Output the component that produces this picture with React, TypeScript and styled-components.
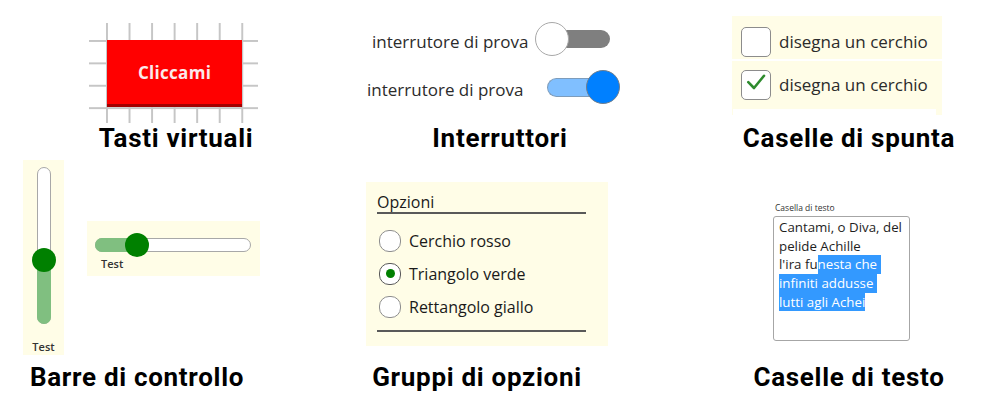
import React from "react";
import styled, { createGlobalStyle } from "styled-components";

const Global = createGlobalStyle`
  html, body { margin: 0; padding: 0; background: #ffffff; }
  body {
    width: 986px; height: 402px; overflow: hidden;
    font-family: "Open Sans", "Liberation Sans", sans-serif;
  }
`;

const PANEL = "#fffde7";

const Page = styled.div`
  width: 986px;
  height: 402px;
  display: flex;
  flex-direction: column;
`;

const Row = styled.div<{ $h: number; $pb: number }>`
  height: ${(p) => p.$h}px;
  box-sizing: border-box;
  padding-bottom: ${(p) => p.$pb}px;
  display: grid;
  grid-template-columns: 330px 360px 296px;
`;

const Cell = styled.div`
  display: flex;
  flex-direction: column;
  align-items: flex-start;
  min-width: 0;
`;

const Caption = styled.div<{ $cx: number }>`
  margin-top: auto;
  margin-left: ${(p) => p.$cx - 130}px;
  width: 260px;
  text-align: center;
  font-family: Roboto, "Liberation Sans", sans-serif;
  font-weight: 700;
  font-size: 26px;
  line-height: 30px;
  letter-spacing: 0.7px;
  color: #000;
  white-space: nowrap;
`;

/* ---------- Tasti virtuali ---------- */
const GridPad = styled.div`
  margin: 23px 0 0 89px;
  width: 169px;
  height: 100px;
  box-sizing: border-box;
  padding: 17px 0 0 18px;
  background-image: linear-gradient(to right, #c6c6c6 2px, transparent 2px),
    linear-gradient(to bottom, #c6c6c6 2px, transparent 2px);
  background-size: 22.55px 100%, 100% 22.4px;
  background-position: 17px 0, 0 17px;
`;

const VirtualButton = styled.button`
  width: 135px;
  height: 67px;
  margin: 0;
  padding: 0;
  border: none;
  border-bottom: 3px solid #a30000;
  box-sizing: border-box;
  background: #ff0000;
  color: #fbeaea;
  font-family: "Open Sans", sans-serif;
  font-weight: 700;
  font-size: 17px;
  letter-spacing: 0.3px;
  display: flex;
  align-items: center;
  justify-content: center;
`;

/* ---------- Interruttori ---------- */
const SwitchStack = styled.div`
  display: flex;
  flex-direction: column;
  gap: 14px;
  margin-top: 22px;
`;

const SwitchRow = styled.div<{ $x: number; $gap: number }>`
  display: flex;
  align-items: center;
  margin-left: ${(p) => p.$x}px;
  gap: ${(p) => p.$gap}px;
`;

const SwitchLabel = styled.span`
  font-size: 17px;
  line-height: 24px;
  padding-top: 5px;
  color: #2b2b2b;
  white-space: nowrap;
`;

const SwitchBody = styled.div<{ $w: number }>`
  position: relative;
  width: ${(p) => p.$w}px;
  height: 34px;
  flex: none;
`;

const SwitchTrack = styled.div<{ $on: boolean }>`
  position: absolute;
  top: 8px;
  box-sizing: border-box;
  ${(p) =>
    p.$on
      ? `left: 0; right: 17px; height: 19px; background: #80bfff; border: 1px solid #7d9cbb; border-right: none; border-radius: 10px 0 0 10px;`
      : `left: 8px; right: 0; height: 18px; background: #7f7f7f; border-radius: 0 9px 9px 0;`}
`;

const SwitchKnob = styled.div<{ $on: boolean }>`
  position: absolute;
  top: 0;
  ${(p) => (p.$on ? "right: 0;" : "left: 0;")}
  width: 34px;
  height: 34px;
  box-sizing: border-box;
  border-radius: 50%;
  background: ${(p) => (p.$on ? "#0080ff" : "#ffffff")};
  border: 1px solid ${(p) => (p.$on ? "#6f7f8f" : "#a8a8a8")};
`;

/* ---------- Caselle di spunta ---------- */
const CheckStack = styled.div`
  margin: 16px 0 0 42px;
  display: flex;
  flex-direction: column;
  gap: 2px;
`;

const CheckPanel = styled.div<{ $h: number; $pt: number }>`
  width: 210px;
  height: ${(p) => p.$h}px;
  box-sizing: border-box;
  padding-top: ${(p) => p.$pt}px;
  background: ${PANEL};
  display: flex;
  flex-direction: column;
`;

const CheckRow = styled.div`
  display: flex;
  align-items: center;
  gap: 8px;
  margin-left: 9px;
`;

const CheckBox = styled.div`
  width: 30px;
  height: 30px;
  box-sizing: border-box;
  border: 1.5px solid #8c8c8c;
  border-radius: 5px;
  background: #fff;
  display: flex;
  align-items: center;
  justify-content: center;
  flex: none;
`;

const CheckLabel = styled.span`
  font-size: 17px;
  line-height: 24px;
  color: #2b2b2b;
  white-space: nowrap;
`;

const WhiteStrip = styled.div`
  margin: auto 6px 0 1px;
  height: 6px;
  background: #ffffff;
`;

/* ---------- Barre di controllo ---------- */
const SliderArea = styled.div`
  display: flex;
  align-items: flex-start;
  gap: 23px;
  margin-left: 23px;
`;

const VPanel = styled.div`
  width: 41px;
  height: 195px;
  box-sizing: border-box;
  padding: 7px 0 1px;
  background: ${PANEL};
  display: flex;
  flex-direction: column;
  align-items: center;
`;

const HPanel = styled.div`
  margin-top: 61px;
  width: 173px;
  height: 55px;
  box-sizing: border-box;
  padding: 17px 0 0 8px;
  background: ${PANEL};
  display: flex;
  flex-direction: column;
  align-items: flex-start;
`;

const Track = styled.div<{ $w: number; $h: number }>`
  position: relative;
  width: ${(p) => p.$w}px;
  height: ${(p) => p.$h}px;
  box-sizing: border-box;
  border: 1px solid #a8a8a8;
  border-radius: 7px;
  background: #fff;
  flex: none;
`;

const Fill = styled.div<{ $vertical: boolean }>`
  position: absolute;
  background: #80bf80;
  ${(p) =>
    p.$vertical
      ? `left: -1px; right: -1px; bottom: -1px; border-radius: 0 0 7px 7px;`
      : `top: -1px; bottom: -1px; left: -1px; border-radius: 7px 0 0 7px;`}
`;

const Thumb = styled.div`
  position: absolute;
  width: 24px;
  height: 24px;
  border-radius: 50%;
  background: #008000;
  transform: translate(-50%, -50%);
`;

const SliderLabel = styled.span<{ $mt: string; $ml: number }>`
  margin-top: ${(p) => p.$mt};
  margin-left: ${(p) => p.$ml}px;
  font-size: 11px;
  font-weight: 600;
  line-height: 14px;
  color: #333;
`;

/* ---------- Gruppi di opzioni ---------- */
const OptionPanel = styled.div`
  margin: 22px 0 0 36px;
  width: 242px;
  height: 164px;
  box-sizing: border-box;
  padding: 10px 0 0 11px;
  background: ${PANEL};
  display: flex;
  flex-direction: column;
`;

const OptionTitle = styled.div`
  width: 209px;
  font-size: 16px;
  line-height: 20px;
  color: #1a1a1a;
  border-bottom: 2px solid #595959;
`;

const OptionList = styled.div`
  margin-top: 10px;
  display: flex;
  flex-direction: column;
`;

const OptionRow = styled.label`
  height: 33.3px;
  display: flex;
  align-items: center;
  gap: 8px;
  margin-left: 2px;
`;

const Radio = styled.span<{ $on?: boolean }>`
  width: 22px;
  height: 22px;
  box-sizing: border-box;
  border-radius: 10px;
  border: 1px solid ${(p) => (p.$on ? "#5a5a5a" : "#8e8e8e")};
  background: #fff;
  display: flex;
  align-items: center;
  justify-content: center;
  flex: none;
`;

const RadioDot = styled.span`
  width: 9px;
  height: 9px;
  border-radius: 50%;
  background: #008000;
`;

const OptionText = styled.span`
  font-size: 16px;
  line-height: 22px;
  color: #1a1a1a;
  white-space: nowrap;
`;

const OptionRule = styled.div`
  margin-top: 6px;
  width: 209px;
  height: 2px;
  background: #595959;
`;

/* ---------- Caselle di testo ---------- */
const BoxLabel = styled.div`
  margin: 43px 0 0 85px;
  font-size: 8.5px;
  line-height: 10px;
  color: #333;
`;

const TextBox = styled.div`
  margin: 3px 0 0 83px;
  width: 137px;
  height: 125px;
  box-sizing: border-box;
  border: 1px solid #a6a6a6;
  border-radius: 3px;
  padding: 1px 0 0 5px;
  background: #fff;
  font-size: 13.3px;
  color: #1e1e1e;
`;

const TextLine = styled.div`
  height: 18.7px;
  line-height: 18.7px;
  white-space: pre;
`;

const Selected = styled.span`
  display: inline-block;
  height: 18.7px;
  background: #3399ff;
  color: #ffffff;
`;

const CheckMark = () => (
  <svg width="30" height="30" viewBox="0 0 30 30" style={{ margin: -1.5 }}>
    <path d="M7.3 12.2 L13 18 L23 5.8" fill="none" stroke="#2e8b2e" strokeWidth="2.6" strokeLinecap="round" strokeLinejoin="round" />
  </svg>
);

export default function App() {
  return (
    <>
      <Global />
      <Page>
        <Row $h={160} $pb={7}>
          <Cell>
            <GridPad>
              <VirtualButton>Cliccami</VirtualButton>
            </GridPad>
            <Caption $cx={176}>Tasti virtuali</Caption>
          </Cell>
          <Cell>
            <SwitchStack>
              <SwitchRow $x={42} $gap={7}>
                <SwitchLabel>interrutore di prova</SwitchLabel>
                <SwitchBody $w={75}>
                  <SwitchTrack $on={false} />
                  <SwitchKnob $on={false} />
                </SwitchBody>
              </SwitchRow>
              <SwitchRow $x={37} $gap={24}>
                <SwitchLabel>interrutore di prova</SwitchLabel>
                <SwitchBody $w={73}>
                  <SwitchTrack $on={true} />
                  <SwitchKnob $on={true} />
                </SwitchBody>
              </SwitchRow>
            </SwitchStack>
            <Caption $cx={170}>Interruttori</Caption>
          </Cell>
          <Cell>
            <CheckStack>
              <CheckPanel $h={43} $pt={11}>
                <CheckRow>
                  <CheckBox />
                  <CheckLabel>disegna un cerchio</CheckLabel>
                </CheckRow>
              </CheckPanel>
              <CheckPanel $h={54} $pt={9}>
                <CheckRow>
                  <CheckBox>
                    <CheckMark />
                  </CheckBox>
                  <CheckLabel>disegna un cerchio</CheckLabel>
                </CheckRow>
                <WhiteStrip />
              </CheckPanel>
            </CheckStack>
            <Caption $cx={159}>Caselle di spunta</Caption>
          </Cell>
        </Row>
        <Row $h={242} $pb={10}>
          <Cell>
            <SliderArea>
              <VPanel>
                <Track $w={14} $h={157}>
                  <Fill $vertical={true} style={{ height: 64 }} />
                  <Thumb style={{ left: "50%", top: 92 }} />
                </Track>
                <SliderLabel $mt="auto" $ml={0}>Test</SliderLabel>
              </VPanel>
              <HPanel>
                <Track $w={156} $h={14}>
                  <Fill $vertical={false} style={{ width: 42 }} />
                  <Thumb style={{ left: 41, top: "50%" }} />
                </Track>
                <SliderLabel $mt="5px" $ml={6}>Test</SliderLabel>
              </HPanel>
            </SliderArea>
            <Caption $cx={137}>Barre di controllo</Caption>
          </Cell>
          <Cell>
            <OptionPanel>
              <OptionTitle>Opzioni</OptionTitle>
              <OptionList>
                <OptionRow>
                  <Radio />
                  <OptionText>Cerchio rosso</OptionText>
                </OptionRow>
                <OptionRow>
                  <Radio $on>
                    <RadioDot />
                  </Radio>
                  <OptionText>Triangolo verde</OptionText>
                </OptionRow>
                <OptionRow>
                  <Radio />
                  <OptionText>Rettangolo giallo</OptionText>
                </OptionRow>
              </OptionList>
              <OptionRule />
            </OptionPanel>
            <Caption $cx={147}>Gruppi di opzioni</Caption>
          </Cell>
          <Cell>
            <BoxLabel>Casella di testo</BoxLabel>
            <TextBox>
              <TextLine>Cantami, o Diva, del</TextLine>
              <TextLine>pelide Achille</TextLine>
              <TextLine>
                l'ira fu<Selected>nesta che </Selected>
              </TextLine>
              <TextLine>
                <Selected>infiniti addusse </Selected>
              </TextLine>
              <TextLine>
                <Selected>lutti agli Achei</Selected>
              </TextLine>
            </TextBox>
            <Caption $cx={159}>Caselle di testo</Caption>
          </Cell>
        </Row>
      </Page>
    </>
  );
}
